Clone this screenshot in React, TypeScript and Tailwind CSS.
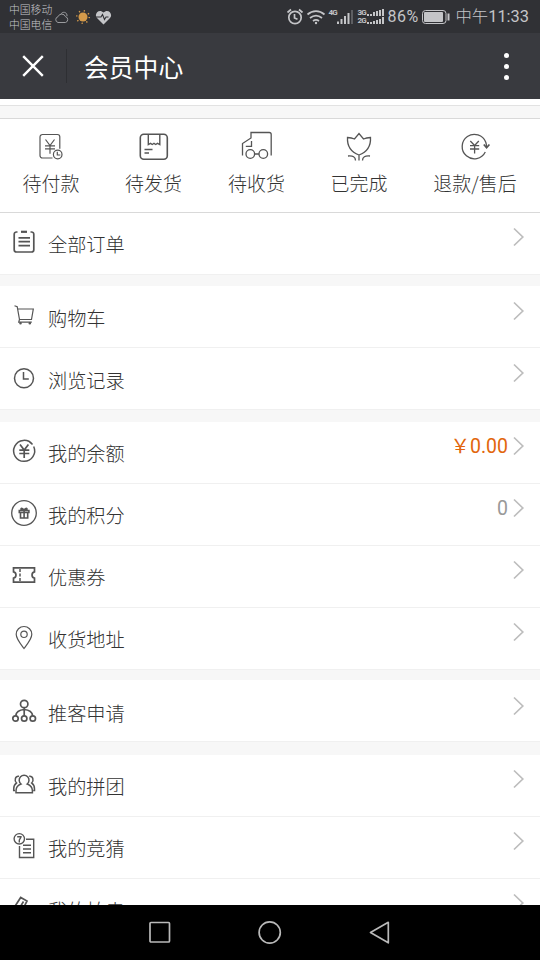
import React from "react";

type IconProps = { children: React.ReactNode; w?: number; h?: number; sw?: number; className?: string };

function Icon({ children, w = 28, h = 28, sw = 1.4, className = "" }: IconProps) {
  return (
    <svg width={w} height={h} viewBox={`0 0 ${w} ${h}`} fill="none" stroke="currentColor" strokeWidth={sw} className={`shrink-0 ${className}`}>
      {children}
    </svg>
  );
}

/* ---------- order status icons, 32 x 32 ---------- */

const PayIcon = () => (
  <Icon w={32} h={32} sw={1.2}>
    <path d="M17.500 28H7.5a2.500 2.500 0 0 1-2.500-2.500V7A2.500 2.500 0 0 1 7.500 4.500H22.500a2.300 2.300 0 0 1 2.300 2.300v12" />
    <path d="M10.500 9.500l4.500 6 4.500-6M10 15.800h10M10 18.800h10M15 15.500v8.300" />
    <circle cx="22.700" cy="24.500" r="4.300" />
    <path d="M22.300 21.800v3.200h3" />
  </Icon>
);

const BoxIcon = () => (
  <Icon w={32} h={32} sw={1.6}>
    <rect x="2.300" y="4.300" width="27" height="25" rx="3.500" />
    <path d="M10.300 4.500v10l2.200-1.200 1.800 1.200 1.700-1.200 1.800 1.200 1.700-1.200 2.300 1.200v-10M6.500 19.500h8M6.500 23h4.500" strokeWidth={1.400} />
  </Icon>
);

const TruckIcon = () => (
  <Icon w={32} h={32} sw={1.300}>
    <path d="M1.500 25.500V13.500L10 8V2.500h18.200a2 2 0 0 1 2 2v21M10.500 11v5.300H4.800M13.600 24h4.400" />
    <circle cx="9.300" cy="24" r="4.300" />
    <circle cx="22.300" cy="24" r="4.300" />
  </Icon>
);

const TulipIcon = () => (
  <Icon w={32} h={32} sw={1.300}>
    <path d="M4.500 7.500c2.500.2 4.500.5 7 1.500L16 3.500 20.500 9c2.500-1 4.500-1.300 7-1.500.5 9-3.500 14.500-11.500 17.500C8 22 4 16.500 4.500 7.500zM16 25v5.500M5 26c5-.5 7.500 1 7.500 4.500M27 26c-5-.5-7.500 1-7.500 4.500" />
  </Icon>
);

const RefundIcon = () => (
  <Icon w={32} h={32} sw={1.300}>
    <path d="M26.300 22A12.200 12.200 0 1 1 26.800 12.300C27.300 13.800 27.600 15.500 27.500 17.500" />
    <path d="M24.800 14.500l2.800 3.300 2.800-3.300" strokeWidth={1.700} />
    <path d="M11.300 11l4.300 4.500 4.200-4.500M11 15.700h9.200M11 19h9.200M15.600 15.500v8" />
  </Icon>
);

/* ---------- list icons, 28 x 28 ---------- */

const ListIcon = () => (
  <Icon sw={1.700}>
    <path d="M7.500 4H6.500a2.300 2.300 0 0 0-2.300 2.300v15.400a2.300 2.300 0 0 0 2.300 2.300h15a2.300 2.300 0 0 0 2.300-2.300V6.300a2.300 2.300 0 0 0-2.300-2.300H20.500M8.500 9.800h11.500M8.500 13.700h11.500M8.500 17.700h11.500" />
    <path d="M11 3.800h6" strokeWidth={2.200} />
  </Icon>
);

const CartIcon = () => (
  <Icon sw={1.200}>
    <path d="M4.500 3.700l2.700 1L9.500 17.500H21.500L23.300 7H7.700M9.500 17.500l-.8 2.700H21.800" />
    <circle cx="10.500" cy="21.300" r=".7" />
    <circle cx="19.800" cy="21.300" r=".7" />
  </Icon>
);

const ClockIcon = () => (
  <Icon sw={1.500}>
    <circle cx="14" cy="14.200" r="9.500" />
    <path d="M13.500 8v7h5.300" />
  </Icon>
);

const YenIcon = () => (
  <Icon sw={1.500}>
    <path d="M22.500 7.500a10.500 10.500 0 1 0 1.200 2M19.500 5.200a10.500 10.500 0 0 1 2.200 1.600" />
    <path d="M10 7.500l4.200 5.500 4.200-5.500M9.300 13.200h10M9.300 16.500h10M14.200 13v8" strokeWidth={1.700} />
  </Icon>
);

const GiftIcon = () => (
  <Icon sw={1.300}>
    <circle cx="14" cy="14" r="12.300" />
    <path d="M9.300 11.500h9.600v2H9.300zM10.500 14v5h7.200v-5M14.100 11.500V19M14 11.500c-1-2.500-3-2.500-3-1.500s1.500 1.500 3 1.500c1-2.500 3-2.500 3-1.500s-1.500 1.500-3 1.500z" strokeWidth={1.600} />
  </Icon>
);

const TicketIcon = () => (
  <Icon sw={1.700}>
    <path d="M3.500 6.800h21v4c-3.300.7-3.300 5.700 0 6.400v4h-21v-4c3.300-.7 3.300-5.700 0-6.400z" />
    <path d="M10 8v13" strokeDasharray="3 1.500" strokeWidth={1.500} />
  </Icon>
);

const PinIcon = () => (
  <Icon sw={1.200}>
    <path d="M14 25.500C11 21.500 6.200 16 6.200 11.300a7.800 7.800 0 0 1 15.600 0C21.800 16 17 21.500 14 25.500z" />
    <circle cx="14" cy="11.300" r="3.200" />
  </Icon>
);

const NetworkIcon = () => (
  <Icon sw={1.700}>
    <circle cx="14.200" cy="7" r="3.700" />
    <circle cx="5.500" cy="21.500" r="2.700" />
    <circle cx="14.200" cy="21.500" r="2.700" />
    <circle cx="22.800" cy="21.500" r="2.700" />
    <path d="M14.200 10.700v8M14.200 12.500c-4.500.3-8 2.500-8.500 6.300M14.200 12.500c4.500.3 8 2.500 8.500 6.300" />
  </Icon>
);

const GroupIcon = () => (
  <Icon sw={1.500}>
    <path d="M11 14a4.900 4.900 0 1 1 6.200 0c3.300 1.200 5.200 3.300 5.200 6.800v2H6v-2c0-3.500 1.800-5.600 5-6.800z" />
    <path d="M9 6.200c-3.800-.6-5 4.400-2.500 6.800-2 1.300-2.800 3.200-2.800 6v1.500h1.300M19.200 6.200c3.800-.6 5 4.400 2.500 6.800 2 1.300 2.800 3.200 2.800 6v1.500h-1.300" />
  </Icon>
);

const QuizIcon = () => (
  <Icon sw={1.400}>
    <circle cx="9.300" cy="6.800" r="5.200" />
    <path d="M7.200 4.800h3.800c0 1.500-1.600 1.800-1.700 3.500M9.300 8v2.500" />
    <path d="M16 7.200h7.700v18.300H9.500V14M13 13.300h8M13 17h8M13 20.700h8" />
  </Icon>
);

const AuctionIcon = () => (
  <Icon sw={1.700}>
    <path d="M4.500 13L10.700 3.500 17 7l-5 10zM13.500 7.500l-3 5" />
  </Icon>
);

const Chevron = () => (
  <Icon w={12} h={20} sw={1.700} className="text-[#bdbdbd]">
    <path d="M1 1.500L9.800 10 1 18.500" />
  </Icon>
);

/* ---------- bars ---------- */

function Bars({ x, y, heights, w, step }: { x: number; y: number; heights: number[]; w: number; step: number }) {
  return (
    <g fill="currentColor" stroke="none">
      {heights.map((h, i) => (
        <rect key={i} x={x + i * step} y={y - h} width={w} height={h} />
      ))}
    </g>
  );
}

function StatusBar() {
  return (
    <div className="flex h-[33px] shrink-0 items-center bg-[#303135] pl-[9px] pr-[11px] text-[#c4c5c8]">
      <div className="w-[45px] whitespace-nowrap text-[10.800px] font-light leading-[15px]">
        <div>中国移动</div>
        <div>中国电信</div>
      </div>
      <Icon w={16} h={16} sw={1} className="text-[#9b9c9f]">
        <path d="M4 13.500a3 3 0 0 1 0-5.800 4 4 0 0 1 7.500 0 3 3 0 0 1 0 5.800zM7 5.200c1-3 6.500-2.500 6 2" />
      </Icon>
      <Icon w={16} h={16} className="ml-[5px] text-[#d49a4a]">
        <circle cx="8" cy="8" r="4.500" fill="currentColor" stroke="none" />
        <circle cx="8" cy="8" r="6.300" strokeWidth={1.500} strokeDasharray="1.200 3.750" />
      </Icon>
      <Icon w={17} h={16} className="ml-[4px]">
        <path d="M8.500 15.500L2 9C-1.500 5 4 -1 8.500 3.500 13-1 18.500 5 15 9z" fill="currentColor" stroke="none" />
        <path d="M1 8h5l1.500-2.500 2 5L11 8h2.500" stroke="#303135" strokeWidth={1.100} />
      </Icon>
      <div className="ml-auto flex items-center">
        <Icon w={18} h={18} sw={1.700}>
          <circle cx="9" cy="9.500" r="6.200" />
          <path d="M8.500 6v4l3 1.300M1.500 4.500l3.500-3M16.500 4.500l-3.500-3" />
        </Icon>
        <Icon w={20} h={18} sw={1.700} className="ml-[2px]">
          <path d="M1.500 6.500c5-4.500 12-4.500 17 0M4 10c4-3.300 8-3.300 12 0M7 13c2-1.500 4-1.500 6 0" />
          <circle cx="10" cy="15" r="1.200" fill="currentColor" stroke="none" />
        </Icon>
        <div className="ml-[2px] flex items-start">
          <span className="w-[9px] font-[Roboto] text-[8px] font-bold leading-[9px] tracking-[-0.800px]">4G</span>
          <Icon w={16} h={18}>
            <Bars x={0} y={16} heights={[2.500, 5, 8, 11]} w={2} step={3.500} />
            <rect x="14" y="2" width="2" height="14" fill="#5d5e62" stroke="none" />
          </Icon>
        </div>
        <div className="ml-[4px] flex items-center">
          <div className="w-[10px] font-[Roboto] text-[8px] font-bold leading-[8px] tracking-[-0.800px]">
            <div>3G</div>
            <div>2G</div>
          </div>
          <Icon w={18} h={17}>
            <Bars x={0} y={8} heights={[2, 2, 4, 5, 6, 7]} w={2} step={3} />
            <Bars x={0} y={16} heights={[2, 2, 3, 4, 5, 7]} w={2} step={3} />
          </Icon>
        </div>
        <span className="ml-[2px] w-[32px] whitespace-nowrap font-[Roboto] text-[16px] leading-[18px] tracking-[0.500px]">86%</span>
        <Icon w={28} h={14} sw={1} className="ml-[3px]">
          <rect x=".5" y=".5" width="23.500" height="13" rx="3" />
          <rect x="2" y="2" width="19" height="10" rx="1" fill="currentColor" stroke="none" />
          <path d="M26.500 3.500v7" strokeWidth={2} />
        </Icon>
        <span className="ml-[5px] whitespace-nowrap font-[Roboto,'Noto_Sans_CJK_SC',sans-serif] text-[16.400px] font-light leading-[20px]">中午<span className="font-normal">11:33</span></span>
      </div>
    </div>
  );
}

function Header() {
  return (
    <header className="flex h-[66px] shrink-0 items-center bg-[#393a3f] pl-[22px] text-white">
      <Icon w={22} h={22} sw={2.400}>
        <path d="M1.200 1.200l19.600 19.600M20.800 1.200L1.200 20.800" />
      </Icon>
      <div className="ml-[22px] h-[34px] w-px bg-[#2e2f33]" />
      <h1 className="ml-[17px] text-[24.800px] leading-[34px]">会员中心</h1>
      <div className="ml-auto mr-[31px] flex flex-col gap-[6px]">
        <i className="size-[5px] rounded-full bg-white" />
        <i className="size-[5px] rounded-full bg-white" />
        <i className="size-[5px] rounded-full bg-white" />
      </div>
    </header>
  );
}

const tabs = [
  { label: "待付款", icon: <PayIcon />, width: "w-[102px]" },
  { label: "待发货", icon: <BoxIcon />, width: "w-[103px]" },
  { label: "待收货", icon: <TruckIcon />, width: "w-[103px]" },
  { label: "已完成", icon: <TulipIcon />, width: "w-[102px]" },
  { label: "退款/售后", icon: <RefundIcon />, width: "w-[130px]" },
];

type Item = { label: string; icon: React.ReactNode; value?: string; color?: string };

const groups: { space: string; pad: string; items: Item[] }[] = [
  { space: "mb-[11px]", pad: "pt-[15px]", items: [{ label: "全部订单", icon: <ListIcon /> }] },
  { space: "mb-[12px]", pad: "pt-[16px]", items: [{ label: "购物车", icon: <CartIcon /> }, { label: "浏览记录", icon: <ClockIcon /> }] },
  {
    space: "mb-[10px]",
    pad: "pt-[15px]",
    items: [
      { label: "我的余额", icon: <YenIcon />, value: "￥0.00", color: "text-[#e2660c]" },
      { label: "我的积分", icon: <GiftIcon />, value: "0", color: "text-[#999]" },
      { label: "优惠券", icon: <TicketIcon /> },
      { label: "收货地址", icon: <PinIcon /> },
    ],
  },
  { space: "mb-[13px]", pad: "pt-[17px]", items: [{ label: "推客申请", icon: <NetworkIcon /> }] },
  {
    space: "",
    pad: "pt-[15px]",
    items: [
      { label: "我的拼团", icon: <GroupIcon /> },
      { label: "我的竞猜", icon: <QuizIcon /> },
      { label: "我的拍卖", icon: <AuctionIcon /> },
    ],
  },
];

function Row({ label, icon, value, color = "", pad }: Item & { pad: string }) {
  return (
    <div className={`flex h-[62px] items-start border-b border-[#f0f0f0] bg-white pl-[10px] pr-[15px] ${pad}`}>
      <div className="text-[#555]">{icon}</div>
      <span className="ml-[10px] mt-[2px] text-[19.200px] font-light leading-[28px] text-[#333]">{label}</span>
      <div className="-mt-px ml-auto flex h-5 items-center">
        {value && (
          <span className={`mr-[5px] mt-[2px] font-[Roboto,'Noto_Sans_CJK_SC',sans-serif] text-[19.500px] leading-5 ${color}`}>{value}</span>
        )}
        <Chevron />
      </div>
    </div>
  );
}

export default function App() {
  return (
    <div className="flex h-[960px] w-[540px] flex-col overflow-hidden bg-[#f7f7f7] font-['Noto_Sans_CJK_SC',sans-serif]">
      <StatusBar />
      <Header />
      <main className="min-h-0 flex-1 overflow-hidden">
        <div className="h-[7px] border-b border-[#e2e2e2] bg-white" />
        <div className="h-[12px]" />
        <nav className="flex h-[95px] border-y border-[#d9d9d9] bg-white text-[#555]">
          {tabs.map((t) => (
            <div key={t.label} className={`flex flex-col items-center pt-[11px] ${t.width}`}>
              {t.icon}
              <span className="mt-[7px] whitespace-nowrap text-[19px] font-light leading-[28px] text-[#333]">{t.label}</span>
            </div>
          ))}
        </nav>
        {groups.map((g) => (
          <section key={g.items[0].label} className={g.space}>
            {g.items.map((it) => (
              <Row key={it.label} {...it} pad={g.pad} />
            ))}
          </section>
        ))}
      </main>
      <footer className="flex h-[55px] shrink-0 items-center bg-black pl-[148px] text-[#b9b9b9]">
        <Icon w={24} h={24} sw={1.700}>
          <rect x="2" y="1.500" width="19.500" height="19.500" rx="1" />
        </Icon>
        <Icon w={24} h={24} sw={1.700} className="ml-[86px]">
          <circle cx="11.700" cy="11.500" r="10.600" />
        </Icon>
        <Icon w={24} h={24} sw={1.700} className="ml-[86px]">
          <path d="M20.300 1.300v20.500L2.500 11.500z" strokeLinejoin="round" />
        </Icon>
      </footer>
    </div>
  );
}
